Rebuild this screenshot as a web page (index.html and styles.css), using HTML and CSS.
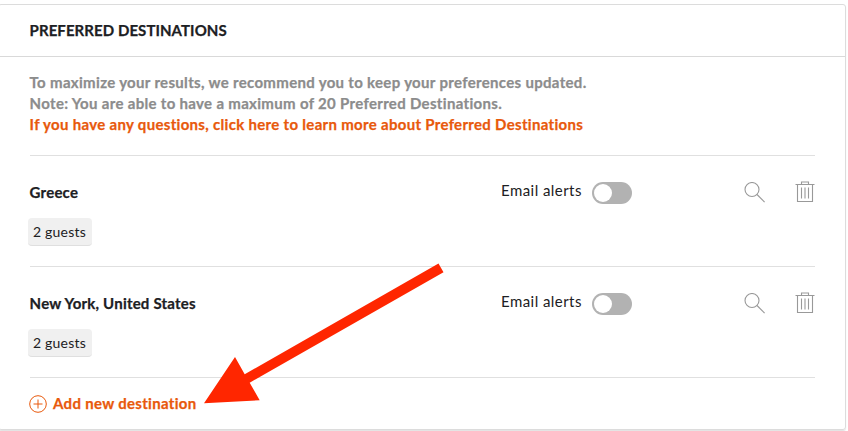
FILE: index.html
```
<!DOCTYPE html>
<html lang="en">
<head>
<meta charset="utf-8">
<title>Preferred Destinations</title>
<link rel="stylesheet" href="styles.css">
</head>
<body>
<svg class="defs" width="0" height="0" aria-hidden="true">
  <symbol id="search" viewBox="0 0 22 22"><circle cx="8" cy="7.500" r="7"/><path d="M13 12.500l7.600 7.600"/></symbol>
  <symbol id="trash" viewBox="0 0 20 22"><path d="M.5 3.500h19M6.500 3.500v-2.500h7v2.500M2.500 3.500v17h15v-17M6.500 6.500v11M10 6.500v11M13.500 6.500v11"/></symbol>
</svg>
<section class="card">
  <header class="card-header"><h1>PREFERRED DESTINATIONS</h1></header>
  <div class="content">
    <div class="intro">
      <p>To maximize your results, we recommend you to keep your preferences updated.</p>
      <p>Note: You are able to have a maximum of 20 Preferred Destinations.</p>
      <a>If you have any questions, click here to learn more about Preferred Destinations</a>
    </div>
    <article class="destination">
      <div class="place"><h2>Greece</h2><span class="tag">2 guests</span></div>
      <div class="alerts"><span class="label">Email alerts</span><span class="toggle"></span></div>
      <div class="actions"><svg class="search"><use href="#search"/></svg><svg class="trash"><use href="#trash"/></svg></div>
    </article>
    <article class="destination">
      <div class="place"><h2>New York, United States</h2><span class="tag">2 guests</span></div>
      <div class="alerts"><span class="label">Email alerts</span><span class="toggle"></span></div>
      <div class="actions"><svg class="search"><use href="#search"/></svg><svg class="trash"><use href="#trash"/></svg></div>
    </article>
    <a class="add"><svg viewBox="0 0 18 18"><circle cx="9" cy="9" r="8.300"/><path d="M9 4.500v9M4.500 9h9"/></svg><span>Add new destination</span></a>
  </div>
</section>
<svg class="arrow" viewBox="0 0 240 142"><path d="M234.500 .5L239.500 9.200L45.700 119.700L55.700 137.200L0 140.200L31 94L40.700 111.300Z"/></svg>
</body>
</html>
```
FILE: styles.css
```
* { box-sizing: border-box; }
body { margin: 0; padding-top: 4px; height: 431px; overflow: hidden; background: #fff; color: #1c2023; font: 15px/21px Lato, "Open Sans", sans-serif; }
h1, h2, p { margin: 0; font-size: 15px; line-height: 21px; font-weight: 700; }
h1, h2, .intro, .add { -webkit-text-stroke: .25px currentColor; }
h1 { letter-spacing: .07px; }
h2 { letter-spacing: .21px; }
.defs { position: absolute; }
.card { width: 848px; height: 426px; margin-left: -2px; border: 1px solid #dcdcdc; border-radius: 3px; box-shadow: 0 1px 1px #e2e2e2; }
.card-header { height: 52px; padding: 15px 30px 0 30.6px; border-bottom: 1px solid #d9d9d9; }
.content { padding: 0 30px 0 31px; }
.intro { height: 99px; padding-top: 15px; border-bottom: 1px solid #e0e0e0; color: #8c8c8c; letter-spacing: .32px; }
.intro a { display: block; color: #e8590c; font-weight: 700; letter-spacing: .31px; }
.intro p, .intro a, h2 { white-space: nowrap; width: max-content; margin-left: -.4px; }
.destination { height: 111px; padding-top: 26px; border-bottom: 1px solid #e0e0e0; display: grid; grid-template-columns: 471px 1fr auto; align-items: start; }
.tag { display: block; width: 64px; height: 28px; margin: 15px 0 0 -2px; padding-left: 5px; background: #f0f0f0; border-bottom: 1px solid #dfdfdf; border-radius: 4px; font-size: 14px; line-height: 28px; letter-spacing: .2px; white-space: nowrap; }
.alerts { display: flex; }
.label { width: 91px; margin-top: -2px; letter-spacing: .45px; white-space: nowrap; }
.toggle { width: 40px; height: 22px; padding: 2px; border-radius: 11px; background: #b2b2b2; }
.toggle::before { content: ""; display: block; width: 18px; height: 18px; border-radius: 50%; background: #fff; }
.actions { display: flex; gap: 29px; }
svg { display: block; fill: none; stroke: #999; stroke-width: 1.1; }
.search { width: 22px; height: 22px; }
.trash { width: 20px; height: 22px; margin-top: -1px; }
.add { display: flex; align-items: center; height: 51px; gap: 6px; margin-left: -1px; color: #e8590c; font-weight: 700; letter-spacing: .31px; white-space: nowrap; }
.add svg { width: 18px; height: 18px; stroke: #e8590c; stroke-width: 1; }
.arrow { position: absolute; left: 204px; top: 263px; width: 240px; height: 142px; fill: #ff2600; stroke: none; }
```
